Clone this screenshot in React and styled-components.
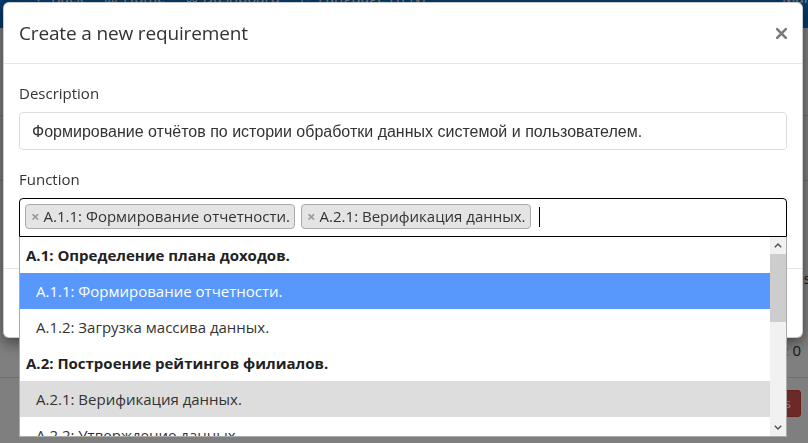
import React from 'react';
import styled, { createGlobalStyle } from 'styled-components';
import { ArrowLeft, House, LayoutDashboard, Flag, ChevronDown } from 'lucide-react';

const GlobalStyle = createGlobalStyle`
  *, *::before, *::after { box-sizing: border-box; }
  html, body { margin: 0; padding: 0; width: 100%; height: 100%; overflow: hidden; background: #fff; }
  body { font-family: "Open Sans", "Noto Sans", sans-serif; color: #333; font-size: 15px; }
`;

/* ---------- page behind the modal ---------- */
const Page = styled.div`
  width: 808px;
  height: 443px;
  overflow: hidden;
  background: #fff;
`;

const Navbar = styled.nav`
  margin-top: -17px;
  height: 45px;
  background: #0a75d8;
  color: #fff;
  display: flex;
  align-items: flex-start;
  gap: 20px;
  padding: 4px 0 0 32px;
  line-height: 20px;
  font-size: 15px;
  white-space: nowrap;
`;

const NavItem = styled.span`
  display: inline-flex;
  align-items: center;
  gap: 5px;
`;

const NavRight = styled.span`
  margin-left: auto;
  width: 26px;
  flex-shrink: 0;
  overflow: visible;
`;

const Section = styled.div`
  height: ${(p) => p.$h}px;
  border-bottom: ${(p) => (p.$line ? '1px solid #ddd' : '0')};
  padding: 0 7px;
  display: flex;
  flex-direction: column;
  align-items: flex-end;
`;

const EdgeText = styled.span`
  margin-top: ${(p) => p.$top}px;
  margin-right: -10px;
  line-height: 20px;
  color: #333;
`;

const Stat = styled.span`
  margin-top: auto;
  margin-bottom: 17px;
  line-height: 20px;
  color: #333;
`;

const DangerButton = styled.button`
  margin-top: 12px;
  height: 27px;
  padding: 0 9px;
  border: 1px solid #d43f3a;
  border-radius: 3px;
  background: #d9534f;
  color: #fff;
  font: 13px/25px "Open Sans", sans-serif;
`;

/* ---------- modal ---------- */
const Backdrop = styled.div`
  position: fixed;
  inset: 0;
  background: rgba(0, 0, 0, 0.5);
`;

const Modal = styled.div`
  position: fixed;
  top: 2px;
  left: 3px;
  width: 800px;
  background: #fff;
  border: 1px solid rgba(0, 0, 0, 0.2);
  border-radius: 6px;
  box-shadow: 0 5px 15px rgba(0, 0, 0, 0.5);
`;

const Header = styled.div`
  display: flex;
  align-items: center;
  justify-content: space-between;
  padding: 16px 15px 15px;
  border-bottom: 1px solid #e5e5e5;
`;

const Title = styled.h4`
  margin: 0;
  font-size: 19px;
  letter-spacing: -0.15px;
  line-height: 29px;
  font-weight: 400;
  color: #333;
`;

const CloseButton = styled.button`
  width: 11px;
  height: 11px;
  padding: 0;
  border: 0;
  background: none;
  display: flex;
  cursor: pointer;
`;

const Body = styled.div`
  padding: 19px 15px 12px;
`;

const FormGroup = styled.div`
  margin-bottom: 19px;
`;

const Label = styled.label`
  display: block;
  font-size: 15px;
  line-height: 21px;
  margin-bottom: 8px;
  color: #333;
`;

const TextInput = styled.input`
  display: block;
  width: 100%;
  height: 38px;
  padding: 1px 12px 0;
  border: 1px solid #ddd;
  border-radius: 4px;
  font: 16px "Liberation Sans", Arial, sans-serif;
  color: #333;
  outline: none;
`;

const SelectWrap = styled.div`
  position: relative;
`;

const TagBox = styled.div`
  height: 39px;
  border: 1px solid #000;
  border-radius: 4px 4px 0 0;
  padding: 5px 5px 7px;
  display: flex;
  align-items: center;
  gap: 6px;
`;

const Tag = styled.span`
  height: 25px;
  display: inline-flex;
  align-items: center;
  padding: 0 4px 0 5px;
  border: 1px solid #aaa;
  border-radius: 4px;
  background: #e4e4e4;
  color: #333;
  font-size: 15px;
  line-height: 23px;
  white-space: nowrap;
`;

const TagRemove = styled.span`
  color: #999;
  font-weight: 700;
  margin-right: 4px;
`;

const Caret = styled.span`
  width: 1px;
  height: 20px;
  margin-left: 2px;
  background: #000;
`;

const Dropdown = styled.div`
  position: absolute;
  top: 100%;
  left: 0;
  right: 0;
  height: 200px;
  background: #fff;
  border: 1px solid #aaa;
  border-top: 0;
  display: flex;
  z-index: 2;
`;

const Results = styled.ul`
  flex: 1;
  margin: 0;
  padding: 0;
  list-style: none;
  overflow: hidden;
`;

const Row = styled.li`
  height: 36px;
  padding: 6px ${(p) => (p.$group ? '6px' : '16px')};
  line-height: 24px;
  font-size: 15px;
  white-space: nowrap;
  font-weight: ${(p) => (p.$group ? 700 : 400)};
  color: ${(p) => (p.$state === 'active' ? '#fff' : p.$group ? '#222' : '#333')};
  background: ${(p) =>
    p.$state === 'active' ? '#5897fb' : p.$state === 'selected' ? '#ddd' : '#fff'};
`;

const ScrollTrack = styled.div`
  width: 16px;
  background: #f1f1f1;
  display: flex;
  flex-direction: column;
`;

const ScrollArrow = styled.div`
  height: 17px;
  display: flex;
  align-items: center;
  justify-content: center;
  margin-top: ${(p) => (p.$down ? 'auto' : '0')};
`;

const ScrollThumb = styled.div`
  height: 68px;
  background: #cdcdcd;
`;

const Footer = styled.div`
  display: flex;
  justify-content: flex-end;
  gap: 5px;
  padding: 15px;
  border-top: 1px solid #e5e5e5;
`;

const Button = styled.button`
  height: 38px;
  padding: 0 14px;
  border-radius: 4px;
  font: 15px "Open Sans", sans-serif;
  border: 1px solid ${(p) => (p.$primary ? '#2e6da4' : '#ccc')};
  background: ${(p) => (p.$primary ? '#337ab7' : '#fff')};
  color: ${(p) => (p.$primary ? '#fff' : '#333')};
`;

const rows = [
  { group: true, text: 'A.1: Определение плана доходов.' },
  { text: 'A.1.1: Формирование отчетности.', state: 'active' },
  { text: 'A.1.2: Загрузка массива данных.' },
  { group: true, text: 'A.2: Построение рейтингов филиалов.' },
  { text: 'A.2.1: Верификация данных.', state: 'selected' },
  { text: 'A.2.2: Утверждение данных.' },
];

const tags = ['A.1.1: Формирование отчетности.', 'A.2.1: Верификация данных.'];

export default function App() {
  return (
    <>
      <GlobalStyle />
      <Page>
        <Navbar>
          <NavItem><ArrowLeft size={14} />Back</NavItem>
          <NavItem><House size={14} />Home</NavItem>
          <NavItem><LayoutDashboard size={12} />Dashboard</NavItem>
          <NavItem><Flag size={13} />Languages (EN)<ChevronDown size={12} /></NavItem>
          <NavRight>Mark</NavRight>
        </Navbar>
        <Section $h={88} $line />
        <Section $h={65} $line />
        <Section $h={197} $line>
          <EdgeText $top={87}>yes</EdgeText>
          <Stat>Всего: 0</Stat>
        </Section>
        <Section $h={60}>
          <DangerButton>Delete selected requirements</DangerButton>
        </Section>
      </Page>
      <Backdrop />
      <Modal role="dialog">
        <Header>
          <Title>Create a new requirement</Title>
          <CloseButton aria-label="Close">
            <svg width="11" height="11" viewBox="0 0 11 11">
              <path d="M1.2 1.2 L9.8 9.8 M9.8 1.2 L1.2 9.8" stroke="#7a7a7a" strokeWidth="2.6" strokeLinecap="square" />
            </svg>
          </CloseButton>
        </Header>
        <Body>
          <FormGroup>
            <Label>Description</Label>
            <TextInput
              readOnly
              value="Формирование отчётов по истории обработки данных системой и пользователем."
            />
          </FormGroup>
          <FormGroup>
            <Label>Function</Label>
            <SelectWrap>
              <TagBox>
                {tags.map((t) => (
                  <Tag key={t}>
                    <TagRemove>×</TagRemove>
                    {t}
                  </Tag>
                ))}
                <Caret />
              </TagBox>
              <Dropdown>
                <Results>
                  {rows.map((r) => (
                    <Row key={r.text} $group={r.group} $state={r.state}>
                      {r.text}
                    </Row>
                  ))}
                </Results>
                <ScrollTrack>
                  <ScrollArrow>
                    <svg width="8" height="5" viewBox="0 0 8 5">
                      <path d="M0.8 4.2 L4 1 L7.2 4.2" fill="none" stroke="#505050" strokeWidth="1.4" />
                    </svg>
                  </ScrollArrow>
                  <ScrollThumb />
                  <ScrollArrow $down>
                    <svg width="8" height="5" viewBox="0 0 8 5">
                      <path d="M0.8 0.8 L4 4 L7.2 0.8" fill="none" stroke="#505050" strokeWidth="1.4" />
                    </svg>
                  </ScrollArrow>
                </ScrollTrack>
              </Dropdown>
            </SelectWrap>
          </FormGroup>
        </Body>
        <Footer>
          <Button>Close</Button>
          <Button $primary>Create</Button>
        </Footer>
      </Modal>
    </>
  );
}
